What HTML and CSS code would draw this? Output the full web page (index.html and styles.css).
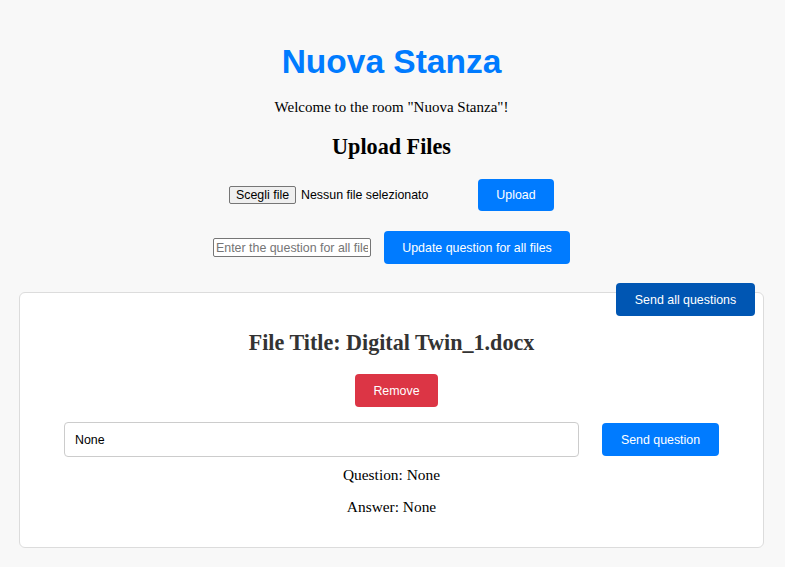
FILE: index.html
```html
<!DOCTYPE html>
<html lang="it">
<head>
<meta charset="utf-8">
<title>Nuova Stanza</title>
<link rel="stylesheet" href="styles.css">
</head>
<body>
<h1 class="title">Nuova Stanza</h1>
<p class="welcome">Welcome to the room "Nuova Stanza"!</p>
<h2 class="section">Upload Files</h2>
<div class="row upload-row">
  <label class="file-input">
    <span class="file-btn">Scegli file</span>
    <span class="file-name">Nessun file selezionato</span>
  </label>
  <button class="btn btn-blue btn-upload">Upload</button>
</div>
<div class="row question-row">
  <input class="all-question" type="text" placeholder="Enter the question for all files">
  <button class="btn btn-blue btn-update">Update question for all files</button>
</div>
<div class="card">
  <button class="btn btn-dark send-all">Send all questions</button>
  <h3 class="file-title">File Title: Digital Twin_1.docx</h3>
  <div class="remove-wrap"><button class="btn btn-red">Remove</button></div>
  <div class="ask-row">
    <input class="ask-input" type="text" value="None">
    <button class="btn btn-blue btn-send">Send question</button>
  </div>
  <p class="qa">Question: None</p>
  <p class="qa answer">Answer: None</p>
</div>
</body>
</html>
```
FILE: styles.css
```css
html, body {
  margin: 0;
  padding: 0;
  background: #f8f8f8;
}
body {
  font-family: "Liberation Serif", "Times New Roman", serif;
  font-size: 15.4px;
  color: #000;
  padding: 0 21px 0 19px;
  text-align: center;
}
.title {
  font-family: "Liberation Sans", Arial, sans-serif;
  font-size: 33.5px;
  font-weight: bold;
  color: #007bff;
  margin: 42px 0 0;
  line-height: 39px;
}
.welcome {
  margin: 17px 0 0;
  line-height: 18px;
  font-size: 15px;
}
.section {
  font-size: 22.2px;
  font-weight: bold;
  margin: 18px 0 0;
  line-height: 26px;
}
.row {
  display: flex;
  justify-content: center;
  align-items: center;
}
.upload-row {
  margin-top: 19px;
  gap: 12px;
}
.question-row {
  margin-top: 20px;
  gap: 13px;
}
.file-input {
  display: flex;
  align-items: center;
  width: 237px;
  font-family: "Liberation Sans", Arial, sans-serif;
  font-size: 12.4px;
  color: #000;
  text-align: left;
  white-space: nowrap;
}
.file-btn {
  box-sizing: border-box;
  height: 18px;
  line-height: 16px;
  padding: 0 6px;
  border: 1px solid #767676;
  border-radius: 2px;
  background: #efefef;
  margin-right: 5px;
}
.btn {
  box-sizing: border-box;
  font-family: "Liberation Sans", Arial, sans-serif;
  font-size: 12.4px;
  color: #fff;
  border: none;
  border-radius: 4px;
  cursor: pointer;
  padding: 0;
  white-space: nowrap;
}
.btn-blue { background: #007bff; }
.btn-dark { background: #0056b3; }
.btn-red { background: #dc3545; }
.btn-upload {
  width: 76px;
  height: 32px;
}
.btn-update {
  width: 186px;
  height: 33px;
}
.all-question {
  box-sizing: border-box;
  width: 158px;
  height: 19px;
  padding: 1px 2px;
  border: 1px solid #767676;
  border-radius: 2px;
  background: #fff;
  font-family: "Liberation Sans", Arial, sans-serif;
  font-size: 12.4px;
}
.all-question::placeholder { color: #757575; }
.card {
  position: relative;
  margin-top: 28px;
  background: #fff;
  border: 1px solid #dcdcdc;
  border-radius: 6px;
  padding: 37px 44px 31px;
}
.send-all {
  position: absolute;
  top: -10px;
  right: 8px;
  width: 139px;
  height: 33px;
}
.file-title {
  margin: 0;
  font-size: 22.1px;
  font-weight: bold;
  color: #333;
  line-height: 25px;
}
.remove-wrap {
  margin-top: 19px;
  display: flex;
  justify-content: center;
  padding-left: 10px;
}
.btn-red {
  width: 83px;
  height: 33px;
}
.ask-row {
  margin-top: 15px;
  display: flex;
  align-items: center;
  gap: 23px;
}
.ask-input {
  flex: 1;
  box-sizing: border-box;
  height: 35px;
  padding: 0 10px;
  border: 1px solid #ccc;
  border-radius: 4px;
  font-family: "Liberation Sans", Arial, sans-serif;
  font-size: 12.4px;
  color: #000;
}
.btn-send {
  width: 117px;
  height: 33px;
}
.qa {
  margin: 9px 0 0;
  line-height: 18px;
}
.answer {
  margin-top: 14px;
}
```
